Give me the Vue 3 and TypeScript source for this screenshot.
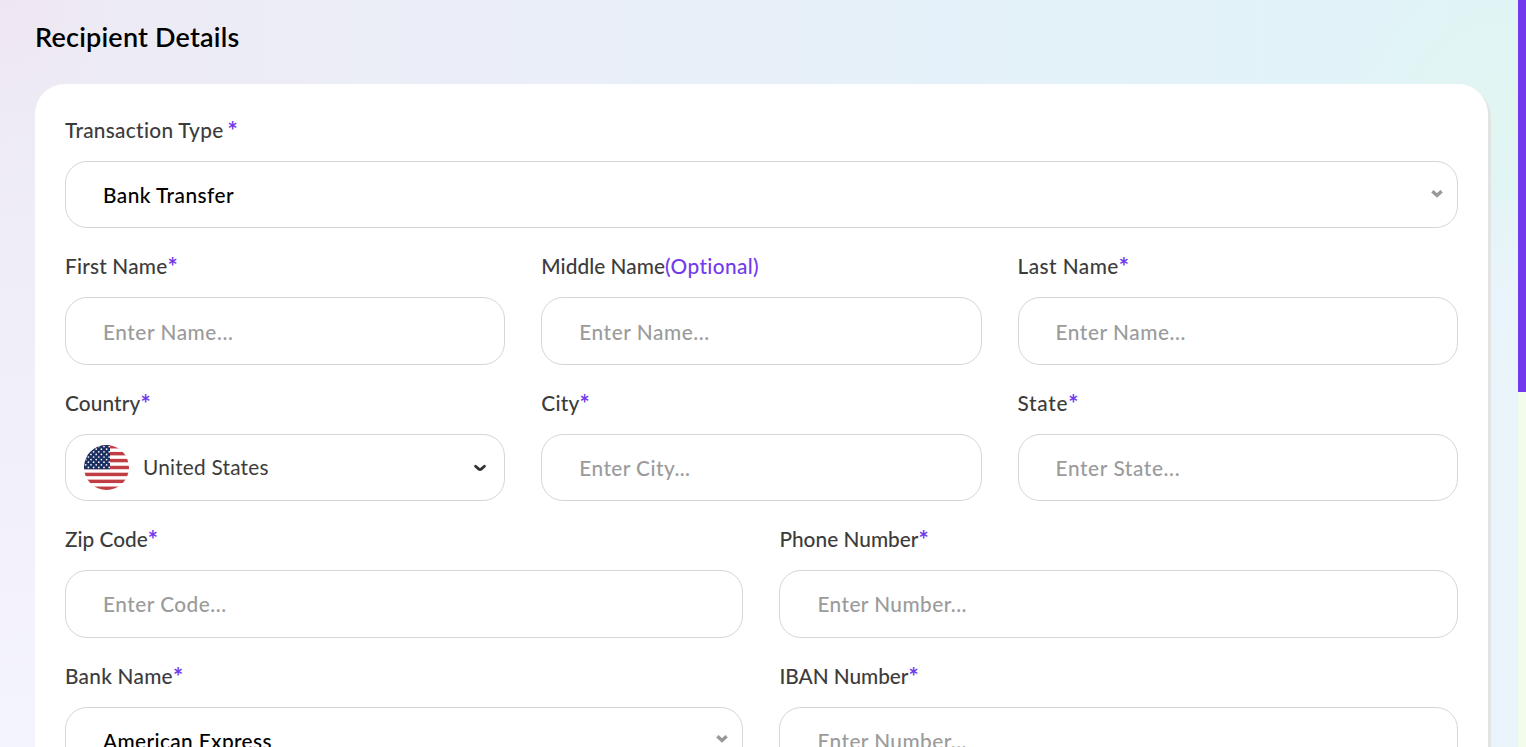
<script setup lang="ts">
interface Field {
  label: string
  mark: string
  text: string
  kind: 'input' | 'select' | 'country'
  // letter spacing, in px, of the label and of the field's text
  labelTrack: number
  textTrack: number
}

const field = (
  label: string, labelTrack: number, text: string, textTrack: number,
  kind: Field['kind'] = 'input', mark = '*',
): Field => ({ label, labelTrack, text, textTrack, kind, mark })

const rows: Field[][] = [
  [field('Transaction Type', 0.3, 'Bank Transfer', 0.47, 'select')],
  [
    field('First Name', 0.2, 'Enter Name...', 0.56),
    field('Middle Name', 0.06, 'Enter Name...', 0.56, 'input', '(Optional)'),
    field('Last Name', 0.46, 'Enter Name...', 0.56),
  ],
  [
    field('Country', 0.12, 'United States', 0.22, 'country'),
    field('City', 0.25, 'Enter City...', 0.45),
    field('State', 0.7, 'Enter State...', 0.62),
  ],
  [
    field('Zip Code', 0, 'Enter Code...', 0.5),
    field('Phone Number', 0.03, 'Enter Number...', 0.44),
  ],
  [
    field('Bank Name', 0.26, 'American Express', 0.38, 'select'),
    field('IBAN Number', -0.04, 'Enter Number...', 0.44),
  ],
]

const stars = Array.from({ length: 9 }, (_, r) =>
  Array.from({ length: r % 2 ? 6 : 7 }, (_, c) => ({ x: c * 5.2 + (r % 2 ? 2.6 : 0) - 6, y: 1.6 + r * 2.6 })),
).flat()
</script>

<template>
  <div class="screen">
    <main class="page">
      <h1 class="title">Recipient Details</h1>
      <form class="card">
        <div v-for="(row, i) in rows" :key="i" class="row">
          <div v-for="f in row" :key="f.label" class="field">
            <div class="label">
              <span :style="{ letterSpacing: f.labelTrack + 'px' }">{{ f.label }}</span>
              <span v-if="f.mark === '*'" class="star" :class="{ apart: i === 0 }">*</span>
              <span v-else class="optional">{{ f.mark }}</span>
            </div>
            <div class="box" :class="f.kind">
              <svg v-if="f.kind === 'country'" class="flag" viewBox="0 0 45 45">
                <defs><clipPath id="disc"><circle cx="22.5" cy="22.5" r="22.5" /></clipPath></defs>
                <g clip-path="url(#disc)">
                  <rect width="45" height="45" fill="#fff" />
                  <rect v-for="n in 7" :key="n" y="0" width="45" height="3.46" fill="#c13d44" :transform="`translate(0 ${(n - 1) * 6.923})`" />
                  <rect width="26" height="24.2" fill="#1c2f63" />
                  <circle v-for="(s, k) in stars" :key="k" :cx="s.x" :cy="s.y" r=".85" fill="#fff" />
                </g>
              </svg>
              <span class="text" :style="{ letterSpacing: f.textTrack + 'px' }">{{ f.text }}</span>
              <svg v-if="f.kind === 'select'" class="caret" viewBox="0 0 12 8"><path d="M1.400 1.200 6 5.500l4.600-4.300" /></svg>
              <svg v-if="f.kind === 'country'" class="caret" viewBox="0 0 12 8"><path d="M1.600 2.200 4.800 5.100Q6 6 7.200 5.100L10.400 2.200" /></svg>
            </div>
          </div>
        </div>
      </form>
    </main>
    <div class="rail"><div class="thumb"></div></div>
  </div>
</template>

<style>
body { overflow: hidden; }
</style>

<style scoped>
.screen {
  display: flex;
  height: 747px;
  overflow: hidden;
  font-family: Lato, sans-serif;
  font-size: 20.800px;
  background: #f3fbea;
}
.page {
  flex: 1;
  box-sizing: border-box;
  padding: 20px 30px 0 35px;
  background:
    radial-gradient(circle 130px at 0 0, #efe6f1, #efe6f100),
    radial-gradient(circle 180px at 1510px 110px, #e1f5f2, #e1f5f200),
    linear-gradient(90deg, #f4f4ff00 0, #f4f4ff00 90%, #e9f4fb 100%) 0 200px no-repeat,
    linear-gradient(#f4f4ff00 15%, #f4f4ff 100%),
    linear-gradient(90deg, #eeebf5 0, #eaeef8 35%, #e4f1f9 65%, #e0f4f8 100%);
}
.title {
  margin: 0 0 30px;
  height: 34px;
  font-size: 27px;
  line-height: 33px;
  font-weight: 600;
  letter-spacing: .2px;
  color: #000;
}
.card {
  box-sizing: border-box;
  height: 900px;
  padding: 30px 30.200px 30px 30px;
  border-radius: 30px;
  background: #fff;
  box-shadow: 3px 3px 0 #e2e4e4;
  display: flex;
  flex-direction: column;
  gap: 22px;
}
.row {
  display: grid;
  grid-auto-flow: column;
  grid-auto-columns: minmax(0, 1fr);
  gap: 36px;
}
.label {
  display: flex;
  height: 47px;
  line-height: 31px;
  font-weight: 500;
  color: #3c3c3c;
}
.star {
  color: #713bed;
  font-size: 24px;
  font-weight: 700;
  line-height: 33px;
}
.star.apart { margin-left: 4px; }
.optional {
  color: #713bed;
  letter-spacing: .37px;
}
.box {
  box-sizing: border-box;
  height: 67.400px;
  padding: 0 14px 0 37px;
  border: 1px solid #d6d6d6;
  border-radius: 22px;
  display: flex;
  align-items: center;
  color: #9b9b9b;
  font-weight: 500;
}
.box .text { flex: 1; }
.select { color: #000; }
.country {
  padding: 0 18px;
  color: #3c3c3c;
  font-weight: 400;
}
.flag { width: 45px; height: 45px; margin-right: 14px; }
.country .text { padding-bottom: 1px; }
.caret { width: 12px; height: 8px; fill: none; stroke: #999; stroke-width: 3.400; }
.select .caret { margin-top: -2px; }
.country .caret { stroke: #333; stroke-width: 2.800; stroke-linecap: round; margin-top: 2px; }
.rail { width: 8px; }
.thumb { height: 392px; background: #713bed; }
</style>
